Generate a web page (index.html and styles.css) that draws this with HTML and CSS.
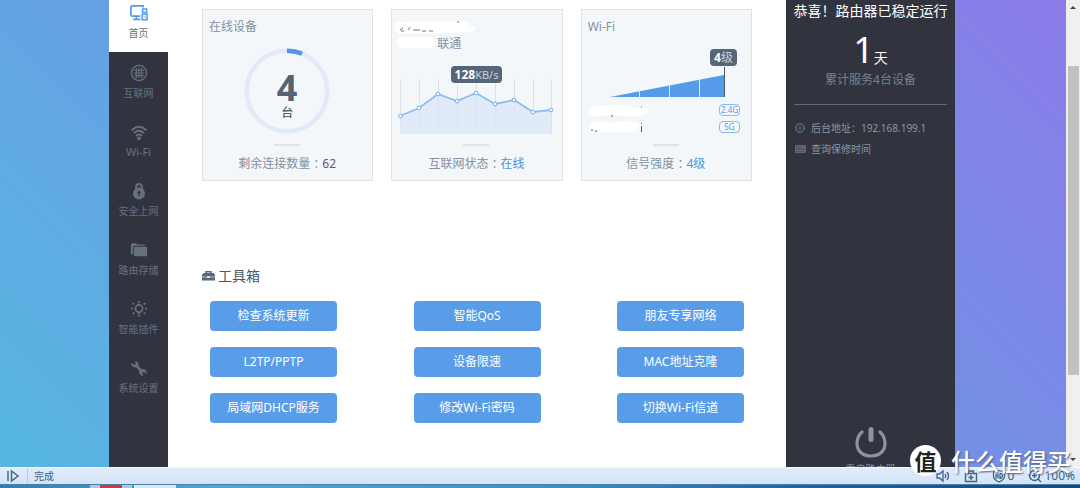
FILE: index.html
```
<!DOCTYPE html>
<html lang="zh-CN">
<head>
<meta charset="utf-8">
<meta name="viewport" content="width=device-width, initial-scale=1">
<title>路由器管理</title>
<link rel="stylesheet" href="styles.css">
</head>
<body>
<div class="browser">
  <div class="viewport">
    <div class="page">
      <nav class="sidebar">
        <a class="nav-item nav-item-active" href="#">
          <svg class="nav-icon" viewBox="0 0 20 20" fill="none" stroke="currentColor"><path d="M11.500 13.500H2.500A1.500 1.500 0 0 1 1 12V3.500A1.500 1.500 0 0 1 2.500 2H14.500V4M7 13.500v3M3.500 17h8" stroke-width="1.900"/><path d="M14 5.500h4.500v4H14z" stroke-width="1.700"/><path d="M13.500 11.500h5.500v6h-5.500z" stroke-width="1.700"/><path d="M15 14.500h2.500"/></svg>
          <span>首页</span>
        </a>
        <a class="nav-item" href="#">
          <svg class="nav-icon" viewBox="0 0 20 20" fill="none" stroke="currentColor"><circle cx="10" cy="10" r="8.400" stroke-width="1.500"/><path d="M10 4v12M7 4.500v11M13 4.500v11M4 10h12M4.500 7h11M4.500 13h11" stroke-width="1.200"/></svg>
          <span>互联网</span>
        </a>
        <a class="nav-item" href="#">
          <svg class="nav-icon" viewBox="0 0 20 20" fill="none" stroke="currentColor" stroke-width="2.100" stroke-linecap="round"><path d="M2.500 7.500Q10 .8 17.500 7.500M5 10.700Q10 6.300 15 10.700M7.300 13.800Q10 11.500 12.700 13.800"/><circle cx="10" cy="17" r="1" fill="currentColor"/></svg>
          <span class="nav-latin">Wi-Fi</span>
        </a>
        <a class="nav-item" href="#">
          <svg class="nav-icon" viewBox="0 0 20 20"><path d="M6.800 9V5.500a3.200 3.200 0 0 1 6.400 0V9" fill="none" stroke="currentColor" stroke-width="2.200"/><circle cx="10" cy="12.800" r="6.600" fill="currentColor"/><circle cx="10" cy="11.500" r="1.500" fill="#31343f"/><path d="M9.300 12h1.400v4H9.300z" fill="#31343f"/></svg>
          <span>安全上网</span>
        </a>
        <a class="nav-item" href="#">
          <svg class="nav-icon" viewBox="0 0 20 20" fill="currentColor"><path d="M1 15V4q0-1.500 1.500-1.500h4L8 4h7.500Q17 4 17 5.300H5.500Q3.500 5.300 3.500 7.300V15z"/><path d="M4.500 7.800q0-1.500 1.300-1.500h11.900q1.300 0 1.300 1.500v7.900q0 1.300-1.300 1.300H5.800q-1.300 0-1.300-1.300z"/></svg>
          <span>路由存储</span>
        </a>
        <a class="nav-item" href="#">
          <svg class="nav-icon" viewBox="0 0 20 20" fill="none" stroke="currentColor" stroke-width="1.900"><circle cx="10" cy="9.500" r="4"/><path d="M8.800 14.500h2.400M8.500 17.500h3M10 1.200v2.300M1 9.500h2.300M16.700 9.500H19M3 3.500l1.700 1.500M17 3.500 15.300 5M3 15.500 4.700 14M17 15.500 15.300 14"/></svg>
          <span>智能插件</span>
        </a>
        <a class="nav-item" href="#">
          <svg class="nav-icon" viewBox="0 0 20 20" fill="currentColor"><path d="M5 2.200a4.300 4.300 0 0 1 4.300 5.600l3.800 3.600a4.300 4.300 0 0 1 5.300 5.300l-2.500-2.300-2 .500-.5 2 2 1.700a4.300 4.300 0 0 1-5-5.700L6.700 9.300a4.300 4.300 0 0 1-5.200-5.200L4 6.400l2-.500.500-2z"/></svg>
          <span>系统设置</span>
        </a>
      </nav>

      <main class="content">
        <section class="cards">
          <article class="card">
            <h2 class="card-title">在线设备</h2>
            <div class="card-body gauge">
              <svg class="gauge-ring" viewBox="0 0 86 86" fill="none" stroke-width="4.500"><circle cx="43" cy="43" r="40.300" stroke="#e1eaf8"/><path d="M43 2.700A40.300 40.300 0 0 1 58 5.600" stroke="#5096e4"/></svg>
              <div class="gauge-value"><strong>4</strong><span>台</span></div>
            </div>
            <p class="card-foot">剩余连接数量<span class="mark">：</span><b class="count">62</b></p>
          </article>

          <article class="card">
            <div class="isp">
              <svg class="smudge" viewBox="0 0 84 32"><path d="M1 6q0-4 6-4L70 1q6 0 6 4 6 1 6 4 0 3-6 3L54 13H8q-7 0-7-7zM4 22q0-5 6-5h26q5 1 5 6 0 4-5 5H10q-6 0-6-6z" fill="#fff"/><path d="M7 10l3-2M8 11h3M15 10l2-3M20 10h7M29 11h4M36 11h4M64 2h2" fill="none" stroke="#6d7784"/></svg>
              <span>联通</span>
            </div>
            <div class="card-body traffic">
              <span class="tag tag-speed"><b>128</b>KB/s</span>
              <svg class="chart" viewBox="0 0 156 58"><path d="M2.500 1v55M21.500 1v55M40.500 1v55M59.500 1v55M78.500 1v55M97.500 1v55M116.500 1v55M135.500 1v55M153.500 1v55" stroke="#dce2e8"/><path d="M2 38 21 30 40 16 59 23 78 15 97 26 116 22 135 34 153 32V56H2z" fill="#dbe5f7" fill-opacity=".75"/><path d="M2 38 21 30 40 16 59 23 78 15 97 26 116 22 135 34 153 32" fill="none" stroke="#8fbdf0" stroke-width="1.800"/><g fill="#fff" stroke="#79aeea"><circle cx="2.500" cy="38" r="1.900"/><circle cx="21" cy="30" r="1.900"/><circle cx="40" cy="16" r="1.900"/><circle cx="59" cy="23" r="1.900"/><circle cx="78" cy="15" r="1.900"/><circle cx="97" cy="26" r="1.900"/><circle cx="116" cy="22" r="1.900"/><circle cx="135" cy="34" r="1.900"/><circle cx="153" cy="32" r="1.900"/></g></svg>
            </div>
            <p class="card-foot">互联网状态<span class="mark">：</span><span class="link">在线</span></p>
          </article>

          <article class="card">
            <h2 class="card-title">Wi-Fi</h2>
            <div class="card-body wifi">
              <span class="tag tag-level"><b>4</b>级</span>
              <svg class="signal" viewBox="0 0 116 30"><path d="M0 30 114 8V30z" fill="#559be9"/><path d="M29.500 22v8M59.500 17v13M89.500 11v19" stroke="#dceafa"/><path d="M114.500 0v30" stroke="#4c5b70"/></svg>
              <div class="ssid">
                <svg class="smudge-line" viewBox="0 0 64 14"><path d="M2 5q5-3 12-2l14-1 14 1q4 3 14 1 8 3 3 6-6 4-16 3l-20-1-16 1Q-1 11 2 5z" fill="#fff"/><path d="M23 13h2M53 4h1" stroke="#555f6c"/></svg>
                <span class="band">2.4G</span>
              </div>
              <div class="ssid">
                <svg class="smudge-line" viewBox="0 0 64 14"><path d="M2 3q8-2 18 0l18-2 12 2q2 4 0 8-8 2-18 1L12 12Q0 12 2 3z" fill="#fff"/><path d="M3 10h2M7 11h2M53.500 6v6M53.500 3v1" stroke="#555f6c"/></svg>
                <span class="band">5G</span>
              </div>
            </div>
            <p class="card-foot">信号强度<span class="mark">：</span><span class="link">4级</span></p>
          </article>
        </section>

        <section class="toolbox">
          <h2 class="toolbox-title">
            <svg class="toolbox-icon" viewBox="0 0 13 11"><path d="M4 2V.8h5V2" fill="none" stroke="#5a6878" stroke-width="1.400"/><path d="M1.500 2h10L13 4v5.500H0V4z" fill="#5a6878"/><path d="M0 6h5M8 6h5" stroke="#b3bcc7"/><path d="M5 5h3v2H5z" fill="#d6dce2"/></svg>
            工具箱
          </h2>
          <div class="tools">
            <button class="tool" type="button">检查系统更新</button>
            <button class="tool" type="button">智能QoS</button>
            <button class="tool" type="button">朋友专享网络</button>
            <button class="tool" type="button">L2TP/PPTP</button>
            <button class="tool" type="button">设备限速</button>
            <button class="tool" type="button">MAC地址克隆</button>
            <button class="tool" type="button">局域网DHCP服务</button>
            <button class="tool" type="button">修改Wi-Fi密码</button>
            <button class="tool" type="button">切换Wi-Fi信道</button>
          </div>
        </section>
      </main>

      <aside class="status">
        <h2 class="status-title">恭喜<span class="mark">！</span>路由器已稳定运行</h2>
        <p class="days"><span class="days-number">1</span>天</p>
        <p class="served">累计服务4台设备</p>
        <ul class="info">
          <li><svg class="info-icon" viewBox="0 0 12 12" fill="none" stroke="currentColor"><circle cx="6" cy="6" r="4.700" stroke-dasharray="2 .9"/><circle cx="6" cy="6" r="3.800"/><circle cx="6" cy="6" r="1.200"/></svg><span>后台地址<span class="mark">：</span>192.168.199.1</span></li>
          <li><svg class="info-icon" viewBox="0 0 12 12" fill="none" stroke="currentColor"><path d="M1.500 2.500h10v7h-10z" fill="#505866"/><path d="M1.500 4.500h10M3 7.500h7"/></svg>查询保修时间</li>
        </ul>
        <button class="power" type="button">
          <svg class="power-icon" viewBox="0 0 32 32" fill="none" stroke="currentColor" stroke-linecap="round"><path d="M7 6C1 11 1 20.500 4 24.500 7.500 29.500 12 30 16 30s8.500-.500 12-5.500C31 20.500 31 11 25 6" stroke-width="3.200"/><path d="M16 3.500v10" stroke-width="5"/></svg>
          <span>重启路由器</span>
        </button>
      </aside>
    </div>

    <div class="scrollbar">
      <svg class="arrow" viewBox="0 0 8 8"><path d="M1 6 4 3l3 3z" fill="#444"/></svg>
      <div class="track"><div class="thumb"></div></div>
      <svg class="arrow" viewBox="0 0 8 8"><path d="M1 2h6L4 5z" fill="#444"/></svg>
    </div>
  </div>

  <footer class="statusbar">
    <svg class="bar-icon" viewBox="0 0 14 14" fill="none" stroke="currentColor" stroke-width="1.400"><path d="M2 2v10M5.500 2 12 7l-6.500 5z"/></svg>
    <span class="done">完成</span>
    <div class="bar-tools">
      <svg class="bar-icon" viewBox="0 0 14 14" fill="none" stroke="currentColor" stroke-width="1.300"><path d="M1 5h2.500L7 2v10L3.500 9H1zM9 5q1.500 2 0 4M11 3q3 4 0 8"/></svg>
      <svg class="bar-icon" viewBox="0 0 14 14" fill="none" stroke="currentColor" stroke-width="1.400"><path d="M1.500 4.500h11v8h-11zM4.500 4V2h5v2M7 6v5M4.500 8.500h5"/></svg>
      <span class="bar-item"><svg class="bar-icon" viewBox="0 0 14 14" fill="none" stroke="currentColor" stroke-width="1.200"><path d="M1.500 3 7 1.500 12.500 3v5q-1 3-5.500 5Q2.500 11 1.500 8zM4 4.500v5M4 7h2M6 4.500v5M8 4.500v5q3-1 2.500-4-1-1.500-2.500-1"/></svg>0</span>
      <span class="bar-item"><svg class="bar-icon" viewBox="0 0 14 14" fill="none" stroke="currentColor" stroke-width="1.400"><circle cx="6.500" cy="6.500" r="5"/><path d="M6.500 4v5M4 6.500h5M10 10l3 3"/></svg>100%</span>
    </div>
  </footer>
  <div class="taskbar"><i class="task"><i class="task-mark"></i></i><i class="task task-light"></i></div>

  <div class="watermark"><span class="watermark-badge">值</span><span>什么值得买</span></div>
</div>
</body>
</html>
```

FILE: styles.css
```
* { box-sizing: border-box; }

body {
  margin: 0;
  font-family: "Noto Sans", "Noto Sans CJK SC", sans-serif;
  font-size: 12px;
  line-height: 16px;
  color: #8490a0;
}

h2, p, ul { margin: 0; padding: 0; font-weight: 400; }
svg { display: block; flex: none; }
button { font: inherit; border: 0; cursor: pointer; }

/* Full-width punctuation centred in its cell */
.mark { font-family: "Noto Sans CJK TC", sans-serif; line-height: 1; }

.browser {
  position: relative;
  display: flex;
  flex-direction: column;
  height: 100vh;
  overflow: hidden;
}

.viewport {
  flex: 1;
  min-height: 0;
  display: flex;
  background: linear-gradient(45deg, #56b7e1, #7192e5 60%, #8c7be8);
}

.page {
  flex: 1;
  display: flex;
  padding: 0 111px 0 109px;
  overflow: hidden;
}

/* Left navigation */
.sidebar { flex: none; width: 59px; background: #31343f; }

.nav-item {
  display: flex;
  flex-direction: column;
  align-items: center;
  gap: 4px;
  padding-top: 12px;
  height: 59px;
  font-size: 10px;
  line-height: 14px;
  color: #66717f;
  text-decoration: none;
}

.nav-item-active { height: 52px; padding-top: 4px; background: #fff; color: #68717b; }
.nav-item-active .nav-icon { color: #559be9; }
.nav-icon { width: 18px; height: 18px; }
.nav-latin { font-size: 11px; }

/* Dashboard */
.content { flex: 1; padding: 9px 34px 0; background: #fff; }

.cards { display: grid; grid-template-columns: repeat(3, 1fr); gap: 18px; }

.card {
  display: flex;
  flex-direction: column;
  height: 172px;
  padding: 9px 7px 8px 6px;
  background: #f3f7fa;
  border: 1px solid #dde2e6;
}

.card-title { font-size: 12px; }
.card-body { flex: 1; display: flex; flex-direction: column; }

.card-foot {
  display: flex;
  flex-wrap: wrap;
  justify-content: center;
  color: #8490a0;
}

.card-foot::before {
  content: "";
  width: 26px;
  height: 2px;
  margin: 0 64px 10px;
  background: #dfe3e7;
}

.card-foot .mark { line-height: 16px; }
.count { font-weight: 400; color: #566273; }
.link { color: #4795da; }

.gauge { align-items: center; padding-top: 13px; }
.gauge-ring { width: 86px; height: 86px; }

.gauge-value {
  display: flex;
  flex-direction: column;
  align-items: center;
  margin-top: -64px;
  color: #566273;
}

.gauge-value strong { font-size: 36px; line-height: 36px; }
.gauge-value span { line-height: 14px; font-weight: 500; }

.isp { display: flex; align-items: flex-end; height: 33px; }
.smudge { width: 84px; height: 32px; margin: 0 -40px 0 -5px; }

.traffic { align-items: center; padding-top: 14px; }

.tag {
  position: relative;
  padding: 0 4px;
  border-radius: 4px;
  background: #56657a;
  color: #c4d2df;
  line-height: 17px;
}

.tag b { color: #fff; }
.tag-speed { font-size: 11px; }
.tag-speed b { font-size: 12px; }
.chart { width: 156px; height: 58px; margin-top: -5px; }

.wifi { padding-top: 14px; }
.tag-level { align-self: flex-end; margin-right: 7px; }
.signal { width: 116px; height: 30px; margin: 1px 0 4px 22px; }

.ssid {
  display: flex;
  align-items: center;
  justify-content: space-between;
  height: 17px;
  padding-right: 4px;
}

.smudge-line { width: 64px; height: 14px; }

.band {
  width: 21px;
  border: 1px solid #8ab9ef;
  border-radius: 4px;
  font-size: 8px;
  line-height: 10px;
  text-align: center;
  color: #559be9;
}

.toolbox { padding-top: 85px; }

.toolbox-title {
  display: flex;
  align-items: center;
  gap: 3px;
  font-size: 14px;
  line-height: 20px;
  color: #4e5a69;
}

.toolbox-icon { width: 13px; height: 11px; }

.tools {
  display: grid;
  grid-template-columns: repeat(3, 127px);
  justify-content: space-between;
  gap: 16px;
  padding: 15px 8px 0;
}

.tool { height: 30px; padding: 0; border-radius: 4px; background: #599de9; color: #fff; }

/* Right status panel */
.status {
  flex: none;
  display: flex;
  flex-direction: column;
  width: 169px;
  padding: 1px 8px 0;
  background: #31343f;
  text-align: center;
}

.status-title {
  font-size: 14px;
  line-height: 20px;
  white-space: nowrap;
  color: #fff;
  align-self: center;
}

.days { padding-top: 11px; line-height: 16px; font-size: 14px; color: #fff; }
.days-number { font-size: 36px; line-height: 36px; }
.served { padding: 4px 0 16px; border-bottom: 1px solid #636a76; color: #77828f; }

.info {
  display: flex;
  flex-direction: column;
  gap: 5px;
  padding-top: 15px;
  list-style: none;
  font-size: 10px;
  color: #8a95a3;
}

.info li { display: flex; align-items: center; gap: 5px; }
.info-icon { width: 12px; height: 12px; color: #606977; }

.power {
  display: flex;
  flex-direction: column;
  align-items: center;
  gap: 3px;
  height: 41px;
  margin-top: auto;
  padding: 0;
  overflow: hidden;
  background: none;
  font-size: 10px;
  color: #8994a2;
}

.power-icon { width: 32px; height: 32px; }

/* Browser chrome */
.scrollbar {
  flex: none;
  display: flex;
  flex-direction: column;
  align-items: center;
  width: 14px;
  padding: 3px 1px;
  background: #f0f0f0;
}

.arrow { width: 8px; height: 8px; }
.track { flex: 1; align-self: stretch; padding: 55px 0 81px 1px; }
.thumb { height: 100%; background: #c1c1c1; }

.statusbar {
  display: flex;
  align-items: center;
  gap: 7px;
  height: 17px;
  padding: 0 5px 0 6px;
  border-top: 1px solid #f2f7fc;
  background: linear-gradient(#e1ecfa, #d3e4f8);
  font-size: 11px;
  color: #3d6485;
}

.bar-icon { width: 14px; height: 14px; }
.done { padding-left: 6px; border-left: 1px solid #bccde0; font-size: 10px; }
.bar-tools { display: flex; align-items: center; gap: 14px; margin-left: auto; }
.bar-item { display: flex; align-items: center; gap: 2px; font-size: 12px; }

.taskbar {
  display: flex;
  gap: 2px;
  height: 4px;
  padding-left: 90px;
  border-top: 1px solid #4c7fa5;
  background: linear-gradient(90deg, #2b7fb5, #49a9d8 20%, #3595cc 50%, #1a63a8 75%, #134a80);
}

.task { display: flex; justify-content: center; width: 42px; background: #a4cde5; }
.task-mark { width: 22px; background: #cc3c30; }
.task-light { background: #dce8ec; }

.watermark {
  position: absolute;
  right: 9px;
  bottom: 12px;
  display: flex;
  align-items: center;
  gap: 10px;
  font-family: "Noto Sans CJK SC", sans-serif;
  font-size: 24px;
  font-weight: 500;
  line-height: 31px;
  color: #fff;
  text-shadow: 1px 1px 2px #4b5f7c;
}

.watermark-badge {
  width: 31px;
  border-radius: 50%;
  background: #fff;
  color: #222;
  font-size: 22px;
  font-weight: 700;
  text-align: center;
  text-shadow: none;
}
```
